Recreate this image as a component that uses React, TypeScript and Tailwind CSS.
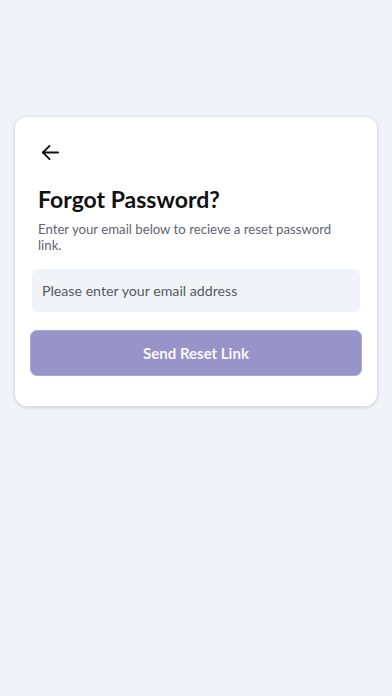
import React from "react";

export default function App() {
  return (
    <div className="min-h-[696px] w-full bg-[#f0f3f8] pt-[117px] px-[15px]" style={{ fontFamily: "Lato, 'Noto Sans', sans-serif" }}>
      <div className="bg-white rounded-[12px] shadow-[0_1px_4px_rgba(0,0,0,0.18)] pt-[26px] pb-[30px] px-[15px]">
        <div className="pl-[11px] h-[18px] flex items-center">
          <svg width="19" height="17" viewBox="0 0 20 18" fill="none" stroke="#111" strokeWidth="2" strokeLinecap="round" strokeLinejoin="round">
            <path d="M18 9H2" />
            <path d="M9 2L2 9l7 7" />
          </svg>
        </div>
        <h1 className="pl-[8px] mt-[23px] text-[23px] leading-[30px] font-bold text-[#111]">Forgot Password?</h1>
        <p className="pl-[8px] pr-[10px] mt-[7px] text-[13.2px] leading-[16px] text-[#5f6570]">
          Enter your email below to recieve a reset password link.
        </p>
        <div className="mx-[2px] mt-[16px] h-[43px] rounded-[6px] bg-[#f0f3f8] flex items-center px-[10px] text-[14.2px] text-[#545a63]">
          Please enter your email address
        </div>
        <button className="mt-[18px] w-full h-[46px] rounded-[7px] bg-[#9893c9] border border-[#aaa6d6] text-white/95 text-[15px] font-bold flex items-center justify-center">
          Send Reset Link
        </button>
      </div>
    </div>
  );
}
